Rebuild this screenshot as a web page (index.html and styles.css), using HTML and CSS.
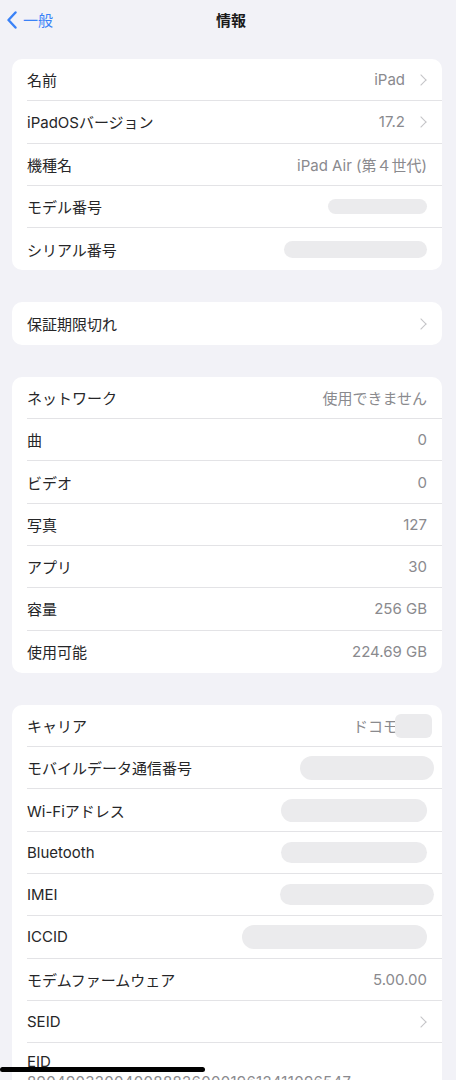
FILE: index.html
```html
<!DOCTYPE html>
<html lang="ja">
<head>
    <meta charset="UTF-8">
    <meta name="viewport" content="width=device-width, initial-scale=1.0">
    <title>情報</title>
    <link rel="stylesheet" href="styles.css">
</head>
<body>

    <div class="nav">
        <a class="back" href="#">
            <svg width="12" height="18" viewBox="0 0 12 18"><path d="M9.5 1.5 L2.5 9 L9.5 16.5" fill="none" stroke="#3a82f7" stroke-width="2.4" stroke-linecap="round" stroke-linejoin="round"/></svg>
            <span>一般</span>
        </a>
        <h1 class="title">情報</h1>
        <span></span>
    </div>

    <div class="content">
        <div class="group">
            <div class="row"><span class="label">名前</span><span class="value">iPad</span><span class="chev"></span></div>
            <div class="row"><span class="label">iPadOSバージョン</span><span class="value">17.2</span><span class="chev"></span></div>
            <div class="row"><span class="label">機種名</span><span class="value">iPad Air (第４世代)</span></div>
            <div class="row"><span class="label">モデル番号</span><span class="value"><span class="blur" style="width: 99px; height: 15px;"></span></span></div>
            <div class="row"><span class="label">シリアル番号</span><span class="value"><span class="blur" style="width: 143px; height: 17px;"></span></span></div>
        </div>

        <div class="group">
            <div class="row"><span class="label">保証期限切れ</span><span class="value"></span><span class="chev"></span></div>
        </div>

        <div class="group">
            <div class="row"><span class="label">ネットワーク</span><span class="value">使用できません</span></div>
            <div class="row"><span class="label">曲</span><span class="value">0</span></div>
            <div class="row"><span class="label">ビデオ</span><span class="value">0</span></div>
            <div class="row"><span class="label">写真</span><span class="value">127</span></div>
            <div class="row"><span class="label">アプリ</span><span class="value">30</span></div>
            <div class="row"><span class="label">容量</span><span class="value">256 GB</span></div>
            <div class="row"><span class="label">使用可能</span><span class="value">224.69 GB</span></div>
        </div>

        <div class="group">
            <div class="row"><span class="label">キャリア</span><span class="value">ドコモ<span class="blur carrier" style="width: 37px; height: 24px;"></span></span></div>
            <div class="row"><span class="label">モバイルデータ通信番号</span><span class="value"><span class="blur over" style="width: 134px; height: 24px;"></span></span></div>
            <div class="row"><span class="label">Wi-Fiアドレス</span><span class="value"><span class="blur" style="width: 146px; height: 23px;"></span></span></div>
            <div class="row"><span class="label">Bluetooth</span><span class="value"><span class="blur" style="width: 146px; height: 21px;"></span></span></div>
            <div class="row"><span class="label">IMEI</span><span class="value"><span class="blur over" style="width: 154px; height: 21px;"></span></span></div>
            <div class="row"><span class="label">ICCID</span><span class="value"><span class="blur" style="width: 185px; height: 24px;"></span></span></div>
            <div class="row"><span class="label">モデムファームウェア</span><span class="value">5.00.00</span></div>
            <div class="row"><span class="label">SEID</span><span class="value"></span><span class="chev"></span></div>
            <div class="row tall">
                <span class="label">EID</span>
                <span class="sub">89049032004008882600019612411096547</span>
            </div>
        </div>
    </div>

    <div class="home-bar"></div>

</body>
</html>
```

FILE: styles.css
```css
body {
    font-family: Inter, "Noto Sans CJK JP", sans-serif;
    background-color: #f2f2f7;
    color: #262628;
    margin: 0;
    padding: 0;
    height: 1080px;
    overflow: hidden;
}

.nav {
    display: grid;
    grid-template-columns: 1fr auto 1fr;
    align-items: center;
    height: 39px;
    padding: 0 0 0 6px;
}

.back {
    display: flex;
    align-items: center;
    gap: 5px;
    color: #3a82f7;
    text-decoration: none;
    font-size: 15px;
}

.title {
    margin: 0;
    font-size: 15px;
    font-weight: 700;
    color: #1a1a1a;
}

.content {
    padding: 20px 14px 0 12px;
}

.group {
    background-color: #fff;
    border-radius: 10px;
    padding-left: 15px;
    margin-bottom: 32px;
}

.row {
    display: flex;
    align-items: center;
    height: 42.3px;
    box-sizing: border-box;
    border-bottom: 1px solid #e3e3e6;
    padding-right: 15px;
    font-size: 15px;
}

.row:last-child {
    border-bottom: none;
}

.label {
    flex: 1;
    white-space: nowrap;
}

.value {
    display: flex;
    align-items: center;
    color: #8a8a8e;
    white-space: nowrap;
}

.chev {
    width: 7px;
    height: 7px;
    margin-left: 12px;
    margin-right: 2px;
    border-top: 1.6px solid #c4c4c7;
    border-right: 1.6px solid #c4c4c7;
    transform: rotate(45deg);
}

.blur {
    display: inline-block;
    background-color: #ebebed;
    border-radius: 12px;
}

.over {
    margin-right: -7px;
}

.carrier {
    margin-left: -3px;
    margin-right: -5px;
    border-radius: 6px;
}

.tall {
    flex-direction: column;
    align-items: flex-start;
    justify-content: flex-start;
    height: auto;
    padding-top: 9px;
}

.tall .label {
    flex: none;
    line-height: 20px;
}

.sub {
    color: #8a8a8e;
    line-height: 20px;
    letter-spacing: 0.3px;
}

.home-bar {
    position: absolute;
    left: 0;
    top: 1067px;
    width: 205px;
    height: 5px;
    border-radius: 3px;
    background-color: #000;
}
```
